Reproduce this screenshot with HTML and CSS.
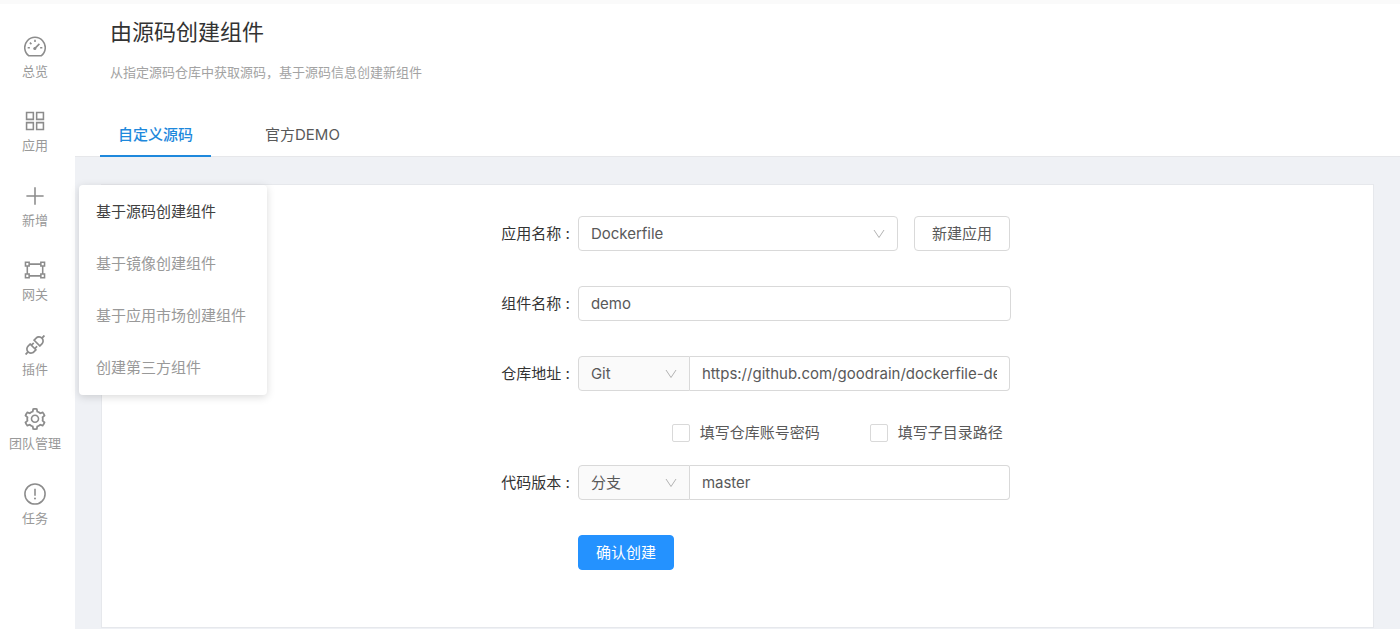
FILE: index.html
```html
<!DOCTYPE html>
<html lang="zh-CN">
<head>
<meta charset="utf-8">
<meta name="viewport" content="width=device-width, initial-scale=1">
<title>由源码创建组件</title>
<link rel="stylesheet" href="styles.css">
</head>
<body>
<div class="app">
  <nav class="sidebar" aria-label="主导航">
    <a class="nav-item" href="#overview">
      <svg class="icon" viewBox="0 0 24 24"><path class="line" d="M5.3 21.6A11.2 11.2 0 1 1 18.7 21.6Z"/><path class="line" d="M11.6 13.8 16.8 8.6M12 4.2v2.4M4 12.8h2.4M17.6 12.8h2.4M6.4 7.2l1.7 1.7"/><circle class="dot" cx="11.8" cy="13.6" r="1.7"/></svg>
      <span>总览</span>
    </a>
    <a class="nav-item" href="#apps">
      <svg class="icon" viewBox="0 0 24 24"><path class="line" d="M2.8 2.8h7.4v7.4h-7.4zM13.8 2.8h7.4v7.4h-7.4zM2.8 13.8h7.4v7.4h-7.4zM13.8 13.8h7.4v7.4h-7.4z"/></svg>
      <span>应用</span>
    </a>
    <a class="nav-item" href="#new">
      <svg class="icon" viewBox="0 0 24 24"><path class="line" d="M12 2.4v19.2M2.6 12h18.8"/></svg>
      <span>新增</span>
    </a>
    <a class="nav-item" href="#gateway">
      <svg class="icon" viewBox="0 0 24 24"><path class="line" d="M1.6 3.6h4v4h-4zM18.4 3.6h4v4h-4zM1.6 16.4h4v4h-4zM18.4 16.4h4v4h-4zM5.6 5.6h12.8M5.6 18.4h12.8M3.6 7.6v8.8M20.4 7.6v8.8"/></svg>
      <span>网关</span>
    </a>
    <a class="nav-item" href="#plugins">
      <svg class="icon" viewBox="64 64 896 896"><path class="solid" d="M917.7 148.8l-42.4-42.4c-1.6-1.6-3.6-2.3-5.7-2.3s-4.1.8-5.7 2.3l-76.1 76.1a199.27 199.27 0 0 0-112.1-34.3c-51.2 0-102.4 19.5-141.5 58.6L432.3 308.7a8.03 8.03 0 0 0 0 11.3L704 591.7c1.6 1.6 3.6 2.3 5.7 2.3 2 0 4.1-.8 5.7-2.3l101.9-101.9c68.9-69 77-175.7 24.3-253.5l76.1-76.1c3.1-3.2 3.1-8.3 0-11.4zM769.1 441.7l-59.4 59.4-186.8-186.8 59.4-59.4c24.9-24.9 58.1-38.7 93.4-38.7 35.3 0 68.4 13.7 93.4 38.7 24.9 24.9 38.7 58.1 38.7 93.4 0 35.3-13.8 68.4-38.7 93.4zm-190.2 105a8.03 8.03 0 0 0-11.3 0L501 613.3 410.7 523l66.7-66.7c3.1-3.1 3.1-8.2 0-11.3L441 408.6a8.03 8.03 0 0 0-11.3 0L363 475.3l-43-43a7.85 7.85 0 0 0-5.7-2.3c-2 0-4.1.8-5.7 2.3L206.8 534.2c-68.9 69-77 175.7-24.3 253.5l-76.1 76.1a8.03 8.03 0 0 0 0 11.3l42.4 42.4c1.6 1.6 3.6 2.3 5.7 2.3s4.1-.8 5.7-2.3l76.1-76.1c33.7 22.9 72.9 34.3 112.1 34.3 51.2 0 102.4-19.5 141.5-58.6l101.9-101.9c3.1-3.1 3.1-8.2 0-11.3l-43-43 66.7-66.7c3.1-3.1 3.1-8.2 0-11.3l-36.6-36.2zM441.7 769.1a131.32 131.32 0 0 1-93.4 38.7c-35.3 0-68.4-13.7-93.4-38.7a131.32 131.32 0 0 1-38.7-93.4c0-35.3 13.7-68.4 38.7-93.4l59.4-59.4 186.8 186.8-59.4 59.4z"/></svg>
      <span>插件</span>
    </a>
    <a class="nav-item" href="#team">
      <svg class="icon" viewBox="64 64 896 896"><path class="solid" d="M924.8 625.7l-65.5-56c3.1-19 4.7-38.4 4.7-57.8s-1.6-38.8-4.7-57.8l65.5-56a32.03 32.03 0 0 0 9.3-35.2l-.9-2.6a443.74 443.74 0 0 0-79.7-137.9l-1.8-2.1a32.12 32.12 0 0 0-35.1-9.5l-81.3 28.9c-30-24.6-63.5-44-99.7-57.6l-15.7-85a32.05 32.05 0 0 0-25.8-25.7l-2.7-.5c-52.1-9.4-106.9-9.4-159 0l-2.7.5a32.05 32.05 0 0 0-25.8 25.7l-15.8 85.4a351.86 351.86 0 0 0-99 57.4l-81.9-29.1a32 32 0 0 0-35.1 9.5l-1.8 2.1a446.02 446.02 0 0 0-79.7 137.9l-.9 2.6c-4.5 12.5-.8 26.5 9.3 35.2l66.3 56.6c-3.1 18.8-4.6 38-4.6 57.1 0 19.2 1.5 38.4 4.6 57.1L99 625.5a32.03 32.03 0 0 0-9.3 35.2l.9 2.6c18.1 50.4 44.9 96.9 79.7 137.9l1.8 2.1a32.12 32.12 0 0 0 35.1 9.5l81.9-29.1c29.8 24.5 63.1 43.9 99 57.4l15.8 85.4a32.05 32.05 0 0 0 25.8 25.7l2.7.5a449.4 449.4 0 0 0 159 0l2.7-.5a32.05 32.05 0 0 0 25.8-25.7l15.7-85a350 350 0 0 0 99.7-57.6l81.3 28.9a32 32 0 0 0 35.1-9.5l1.8-2.1c34.8-41.1 61.6-87.5 79.7-137.9l.9-2.6c4.5-12.3.8-26.3-9.3-35zM788.3 465.9c2.5 15.1 3.8 30.6 3.8 46.1s-1.3 31-3.8 46.1l-6.6 40.1 74.7 63.9a370.03 370.03 0 0 1-42.6 73.6L721 702.8l-31.4 25.8c-23.9 19.6-50.5 35-79.3 45.8l-38.1 14.3-17.9 97a377.5 377.5 0 0 1-85 0l-17.9-97.2-37.8-14.5c-28.5-10.8-55-26.2-78.7-45.7l-31.4-25.9-93.4 33.2c-17-22.9-31.2-47.6-42.6-73.6l75.5-64.5-6.5-40c-2.4-14.9-3.7-30.3-3.7-45.5 0-15.3 1.2-30.6 3.7-45.5l6.5-40-75.5-64.5c11.3-26.1 25.6-50.7 42.6-73.6l93.4 33.2 31.4-25.9c23.7-19.5 50.2-34.9 78.7-45.7l37.9-14.3 17.9-97.2c28.1-3.2 56.8-3.2 85 0l17.9 97 38.1 14.3c28.7 10.8 55.4 26.2 79.3 45.8l31.4 25.8 92.8-32.9c17 22.9 31.2 47.6 42.6 73.6L781.8 426l6.5 39.9zM512 326c-97.2 0-176 78.8-176 176s78.8 176 176 176 176-78.8 176-176-78.8-176-176-176zm79.2 255.2A111.6 111.6 0 0 1 512 614c-29.9 0-58-11.7-79.2-32.8A111.6 111.6 0 0 1 400 502c0-29.9 11.7-58 32.8-79.2C454 401.6 482.1 390 512 390c29.9 0 58 11.6 79.2 32.8A111.6 111.6 0 0 1 624 502c0 29.9-11.7 58-32.8 79.2z"/></svg>
      <span>团队管理</span>
    </a>
    <a class="nav-item" href="#tasks">
      <svg class="icon" viewBox="0 0 24 24"><circle class="line" cx="12" cy="12" r="11"/><path class="line" d="M12 6.4v7.4"/><circle class="dot" cx="12" cy="17" r="1.1"/></svg>
      <span>任务</span>
    </a>
  </nav>

  <div class="page">
    <header class="page-header">
      <h1 class="title">由源码创建组件</h1>
      <p class="description">从指定源码仓库中获取源码，基于源码信息创建新组件</p>
      <div class="tabs" role="tablist">
        <button class="tab tab-active" type="button" role="tab" aria-selected="true">自定义源码</button>
        <button class="tab" type="button" role="tab" aria-selected="false">官方DEMO</button>
      </div>
    </header>

    <main class="content">
      <div class="submenu">
        <a class="submenu-item submenu-active" href="#source">基于源码创建组件</a>
        <a class="submenu-item" href="#image">基于镜像创建组件</a>
        <a class="submenu-item" href="#market">基于应用市场创建组件</a>
        <a class="submenu-item" href="#third-party">创建第三方组件</a>
      </div>

      <form class="card">
        <div class="row">
          <label class="label" for="app-name">应用名称 :</label>
          <div class="field field-split">
            <div class="select-wrap select-wide">
              <select class="control select" id="app-name"><option>Dockerfile</option></select>
              <svg class="arrow" viewBox="0 0 12 12"><path d="M1 2 6 9.5 11 2"/></svg>
            </div>
            <button class="button" type="button">新建应用</button>
          </div>
        </div>

        <div class="row">
          <label class="label" for="component-name">组件名称 :</label>
          <div class="field"><input class="control" id="component-name" type="text" value="demo"></div>
        </div>

        <div class="row">
          <label class="label" for="repo-url">仓库地址 :</label>
          <div class="field field-group">
            <div class="select-wrap select-addon">
              <select class="control select" aria-label="仓库类型"><option>Git</option></select>
              <svg class="arrow" viewBox="0 0 12 12"><path d="M1 2 6 9.5 11 2"/></svg>
            </div>
            <input class="control control-joined" id="repo-url" type="text" value="https://github.com/goodrain/dockerfile-demo.git">
          </div>
        </div>

        <div class="row row-checks">
          <div class="field field-checks">
            <label class="check"><input class="check-box" type="checkbox">填写仓库账号密码</label>
            <label class="check"><input class="check-box" type="checkbox">填写子目录路径</label>
          </div>
        </div>

        <div class="row">
          <label class="label" for="code-version">代码版本 :</label>
          <div class="field field-group">
            <div class="select-wrap select-addon">
              <select class="control select" aria-label="版本类型"><option>分支</option></select>
              <svg class="arrow" viewBox="0 0 12 12"><path d="M1 2 6 9.5 11 2"/></svg>
            </div>
            <input class="control control-joined" id="code-version" type="text" value="master">
          </div>
        </div>

        <div class="row">
          <div class="field"><button class="button button-primary" type="submit">确认创建</button></div>
        </div>
      </form>
    </main>
  </div>
</div>
</body>
</html>
```
FILE: styles.css
```css
* {
  box-sizing: border-box;
}

body {
  margin: 0;
  color: #595959;
  background: #fff;
  font: 15px/24px Inter, "Noto Sans CJK SC", sans-serif;
}

button,
input,
select {
  font: inherit;
  color: inherit;
}

a {
  color: inherit;
  text-decoration: none;
}

.app {
  display: flex;
  min-height: 100vh;
  border-top: 4px solid #fafafa;
}

/* Sidebar */
.sidebar {
  display: flex;
  flex: none;
  flex-direction: column;
  width: 75px;
  padding: 20px 0 84px;
}

.nav-item {
  display: flex;
  flex: 1;
  flex-direction: column;
  align-items: center;
  gap: 3px;
  padding-top: 12px;
  color: #999;
  font-size: 13px;
  line-height: 20px;
  white-space: nowrap;
}

.nav-item span {
  margin-right: 5px;
}

.icon {
  width: 22px;
  height: 22px;
  margin-right: 5px;
}

.line {
  fill: none;
  stroke: #8c8c8c;
  stroke-width: 1.7;
}

.dot,
.solid {
  fill: #8c8c8c;
}

/* Page header */
.page {
  display: flex;
  flex: 1;
  flex-direction: column;
  min-width: 0;
}

.page-header {
  padding: 12px 25px 0;
  border-bottom: 1px solid #e6e7ea;
}

.title {
  margin: 0 0 14px;
  padding-left: 10px;
  color: #333;
  font-size: 22px;
  font-weight: 400;
  line-height: 32px;
}

.description {
  margin: 0 0 29px;
  padding-left: 10px;
  color: #a3a3a3;
  font-size: 13px;
  line-height: 20px;
}

.tabs {
  display: flex;
  gap: 36px;
  margin-bottom: -1px;
}

.tab {
  padding: 12px 18px 8px;
  border: 0;
  border-bottom: 2px solid transparent;
  background: none;
  line-height: 24px;
}

.tab-active {
  border-color: #1e88dc;
  color: #1e88dc;
  font-weight: 500;
}

/* Content */
.content {
  position: relative;
  display: flex;
  flex: 1;
  padding: 27px 26px 1px;
  background: #eff1f5;
}

.card {
  display: flex;
  flex: 1;
  flex-direction: column;
  gap: 35px;
  padding: 31px 2px 40px 0;
  border: 1px solid #e6e8ec;
  background: #fff;
}

.row {
  display: grid;
  grid-template-columns: 3fr 5fr;
  align-items: center;
}

.label {
  padding-right: 8px;
  color: #333;
  text-align: right;
}

.field {
  grid-column: 2;
  width: 433px;
}

.field-split {
  display: flex;
  gap: 16px;
}

.field-group {
  display: flex;
  padding-right: 1px;
}

.row-checks {
  margin: -5px 0 -15px;
}

.field-checks {
  display: flex;
  justify-content: flex-end;
  gap: 50px;
  padding-right: 8px;
}

.control {
  width: 100%;
  height: 35px;
  padding: 0 12px;
  border: 1px solid #d9d9d9;
  border-radius: 4px;
  background: #fff;
}

.control-joined {
  flex: 1;
  width: 0;
  border-left: 0;
  border-radius: 0 4px 4px 0;
}

.select-wrap {
  display: grid;
  align-items: center;
}

.select-wrap > * {
  grid-area: 1 / 1;
}

.select-wide {
  width: 320px;
}

.select-addon {
  width: 112px;
}

.select-addon .control {
  border-radius: 4px 0 0 4px;
  background: #fafafa;
}

.select {
  appearance: none;
}

.arrow {
  justify-self: end;
  width: 12px;
  height: 12px;
  margin-right: 13px;
  fill: none;
  stroke: #b3b3b3;
  pointer-events: none;
}

.button {
  height: 35px;
  padding: 0 17px;
  border: 1px solid #d9d9d9;
  border-radius: 4px;
  background: #fff;
  white-space: nowrap;
}

.button-primary {
  border-color: #2492ff;
  background: #2492ff;
  color: #fff;
}

.check {
  display: flex;
  align-items: center;
  gap: 10px;
  white-space: nowrap;
}

.check-box {
  width: 18px;
  height: 18px;
  margin: 0;
  border: 1px solid #d9d9d9;
  border-radius: 2px;
  background: #fff;
  appearance: none;
}

.check-box:checked {
  background: #2492ff;
}

/* Flyout menu of the sidebar */
.submenu {
  position: absolute;
  top: 28px;
  left: 4px;
  display: flex;
  flex-direction: column;
  padding: 1px 0;
  border-radius: 4px;
  background: #fff;
  box-shadow: 0 2px 8px rgba(0, 0, 0, 0.15);
}

.submenu-item {
  padding: 14px 21px 14px 17px;
  color: #999;
}

.submenu-active {
  color: #404040;
}
```
